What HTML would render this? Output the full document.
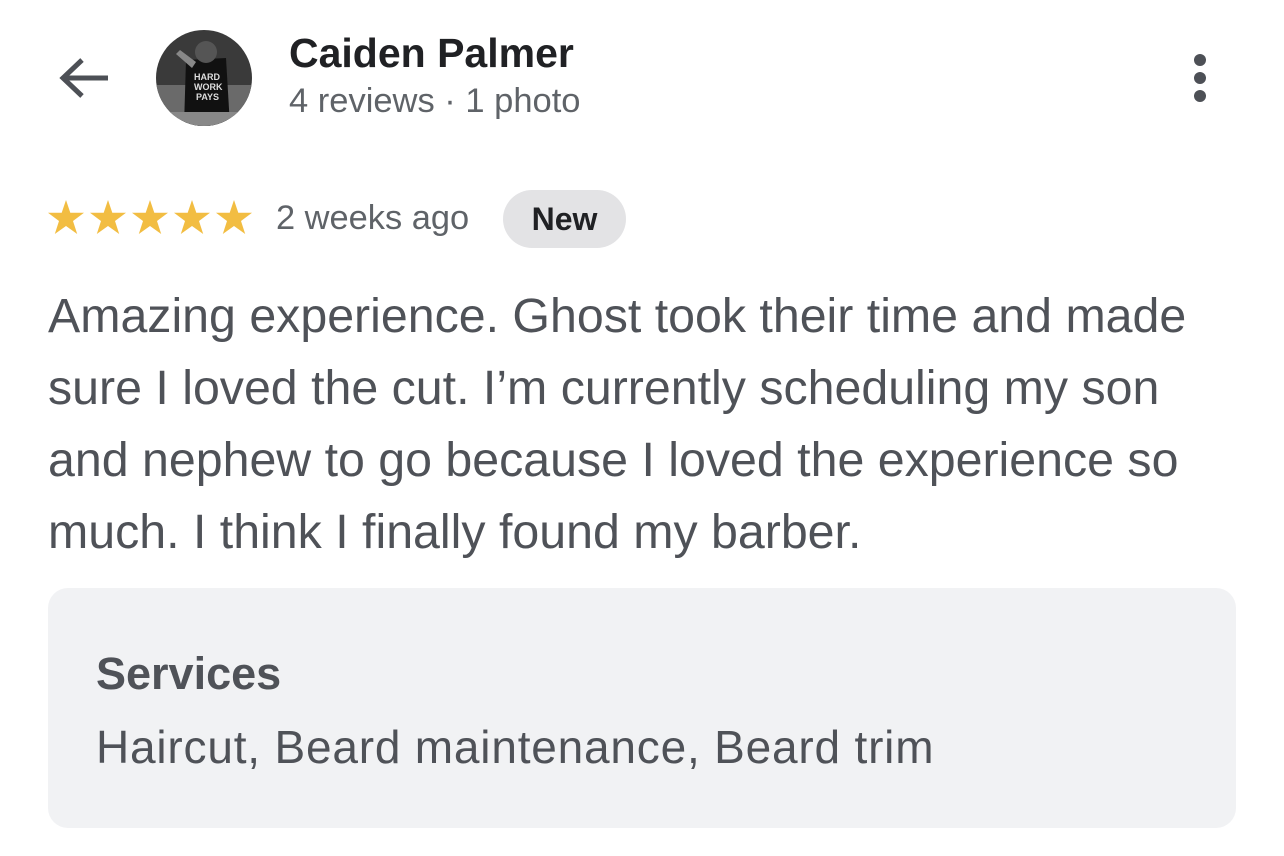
<!DOCTYPE html>
<html><head><meta charset="utf-8"><style>
body{margin:0;width:1284px;height:856px;background:#fff;font-family:"Liberation Sans",Arial,sans-serif;position:relative;overflow:hidden}
.a{position:absolute;white-space:nowrap}
</style></head><body>
<svg class="a" style="left:56px;top:52px" width="56" height="52" viewBox="0 0 56 52"><path d="M52 26H8M26 8L7 26L26 44" fill="none" stroke="#4d5056" stroke-width="5"/></svg>
<svg class="a" style="left:156px;top:30px" width="96" height="96" viewBox="0 0 96 96">
<defs><clipPath id="c"><circle cx="48" cy="48" r="48"/></clipPath></defs>
<g clip-path="url(#c)"><rect width="96" height="96" fill="#3a3a3a"/><rect y="55" width="96" height="41" fill="#6a6a6a"/><path d="M30 30 L70 28 L74 96 L28 96Z" fill="#111"/><circle cx="50" cy="22" r="11" fill="#555"/><path d="M24 20 L40 32 L36 38 L20 24Z" fill="#888"/><text x="38" y="50" font-size="9" fill="#ddd" font-weight="bold" font-family="Liberation Sans">HARD</text><text x="38" y="60" font-size="9" fill="#ddd" font-weight="bold" font-family="Liberation Sans">WORK</text><text x="40" y="70" font-size="9" fill="#ddd" font-weight="bold" font-family="Liberation Sans">PAYS</text><rect y="82" width="96" height="14" fill="#888"/></g></svg>
<div class="a" style="left:289px;top:30px;font-size:41px;font-weight:bold;color:#202124">Caiden Palmer</div>
<div class="a" style="left:289px;top:82px;font-size:34.5px;color:#5f6368">4 reviews · 1 photo</div>
<svg class="a" style="left:1188px;top:52px" width="24" height="52"><circle cx="12" cy="8" r="6" fill="#4d5056"/><circle cx="12" cy="26" r="6" fill="#4d5056"/><circle cx="12" cy="44" r="6" fill="#4d5056"/></svg>
<svg class="a" style="left:48px;top:200px" width="206" height="38" viewBox="0 0 206 38">
<defs><path id="s" d="M18 0L22.3 12.8H36L25 21L29.2 34L18 26L6.8 34L11 21L0 12.8H13.7Z" fill="#f2bd42"/></defs>
<use href="#s" x="0"/><use href="#s" x="42"/><use href="#s" x="84"/><use href="#s" x="126"/><use href="#s" x="168"/></svg>
<div class="a" style="left:276px;top:199px;font-size:34.4px;color:#5f6368">2 weeks ago</div>
<div class="a" style="left:503px;top:190px;width:123px;height:58px;border-radius:29px;background:#e3e3e5;color:#202124;font-size:32px;font-weight:bold;line-height:58px;text-align:center">New</div>
<div class="a" style="left:48px;top:280px;font-size:48.3px;line-height:72px;color:#4f5258">Amazing experience. Ghost took their time and made<br>sure I loved the cut. I’m currently scheduling my son<br>and nephew to go because I loved the experience so<br>much. I think I finally found my barber.</div>
<div class="a" style="left:48px;top:588px;width:1188px;height:240px;border-radius:20px;background:#f1f2f4"></div>
<div class="a" style="left:96px;top:648px;font-size:45px;font-weight:bold;color:#4f5258">Services</div>
<div class="a" style="left:96px;top:720px;font-size:46px;letter-spacing:0.8px;color:#4f5258">Haircut, Beard maintenance, Beard trim</div>
</body></html>
